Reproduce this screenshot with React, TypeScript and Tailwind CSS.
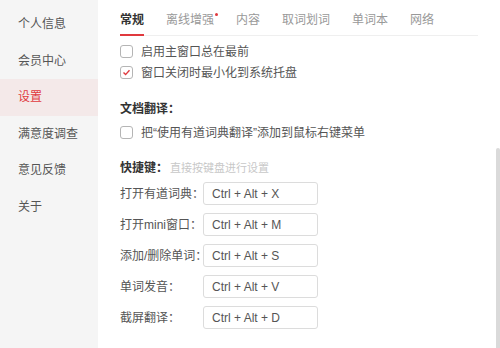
const font = { fontFamily: '"Liberation Sans", "Noto Sans CJK SC", sans-serif' };

const menu = ["个人信息", "会员中心", "设置", "满意度调查", "意见反馈", "关于"];
const tabs = ["常规", "离线增强", "内容", "取词划词", "单词本", "网络"];
const keys = [
  ["打开有道词典：", "Ctrl + Alt + X"],
  ["打开mini窗口：", "Ctrl + Alt + M"],
  ["添加/删除单词：", "Ctrl + Alt + S"],
  ["单词发音：", "Ctrl + Alt + V"],
  ["截屏翻译：", "Ctrl + Alt + D"],
];

const Checkbox = ({ checked, label }: { checked?: boolean; label: string }) => (
  <div className="flex items-center h-[21px]">
    <div className="w-[13px] h-[13px] rounded-[3px] border border-[#b5b5b5] bg-white flex items-center justify-center">
      {checked && (
        <svg width="9" height="9" viewBox="0 0 9 9">
          <path d="M1.5 4.5 L3.6 6.6 L7.5 2.2" fill="none" stroke="#e0393e" strokeWidth="1.4" />
        </svg>
      )}
    </div>
    <span className="ml-[8px] text-[12px] text-[#555]">{label}</span>
  </div>
);

export default function App() {
  return (
    <div className="flex w-[500px] h-[348px] bg-white overflow-hidden" style={font}>
      <div className="w-[98px] shrink-0 bg-[#f5f5f5] pt-[6px]">
        {menu.map((m) => (
          <div
            key={m}
            className={`h-[36.5px] flex items-center pl-[18px] text-[12px] ${
              m === "设置" ? "bg-[#f4e9e9] text-[#e0393e]" : "text-[#555]"
            }`}
          >
            {m}
          </div>
        ))}
      </div>

      <div className="flex-1 pl-[22px] pr-[18px]">
        <div className="flex gap-[22px] h-[36px] border-b border-[#efefef]">
          {tabs.map((t, i) => (
            <div key={t} className="relative pt-[13px] text-[12px] leading-[14px]">
              <span className={i === 0 ? "font-bold text-[#333]" : "text-[#999]"}>{t}</span>
              {i === 0 && <div className="absolute left-0 right-0 bottom-[-1px] h-[2px] bg-[#e0393e]" />}
              {i === 1 && <div className="absolute right-[-4px] top-[13px] w-[3px] h-[3px] rounded-full bg-[#e0393e]" />}
            </div>
          ))}
        </div>

        <div className="mt-[5px]">
          <Checkbox label="启用主窗口总在最前" />
          <Checkbox checked label="窗口关闭时最小化到系统托盘" />
        </div>

        <div className="mt-[16px] h-[20px] flex items-center text-[12px] font-bold text-[#333]">文档翻译：</div>
        <div className="mt-[3px]">
          <Checkbox label="把“使用有道词典翻译”添加到鼠标右键菜单" />
        </div>

        <div className="mt-[15px] h-[20px] flex items-center">
          <span className="text-[12px] font-bold text-[#333]">快捷键：</span>
          <span className="ml-[2px] text-[11px] text-[#c8c8c8]">直接按键盘进行设置</span>
        </div>

        <div className="mt-[4px] flex flex-col gap-[8px]">
          {keys.map(([l, k]) => (
            <div key={l} className="flex items-center h-[23px]">
              <span className="w-[83px] shrink-0 whitespace-nowrap text-[12px] text-[#555]">{l}</span>
              <div className="w-[115px] h-[23px] border border-[#dcdcdc] rounded-[3px] flex items-center pl-[8px] text-[12px] text-[#555]">
                {k}
              </div>
            </div>
          ))}
        </div>
      </div>

      <div className="w-[4px] shrink-0 pt-[148px]">
        <div className="h-full bg-[#dadada] rounded-t-[2px]" />
      </div>
    </div>
  );
}
